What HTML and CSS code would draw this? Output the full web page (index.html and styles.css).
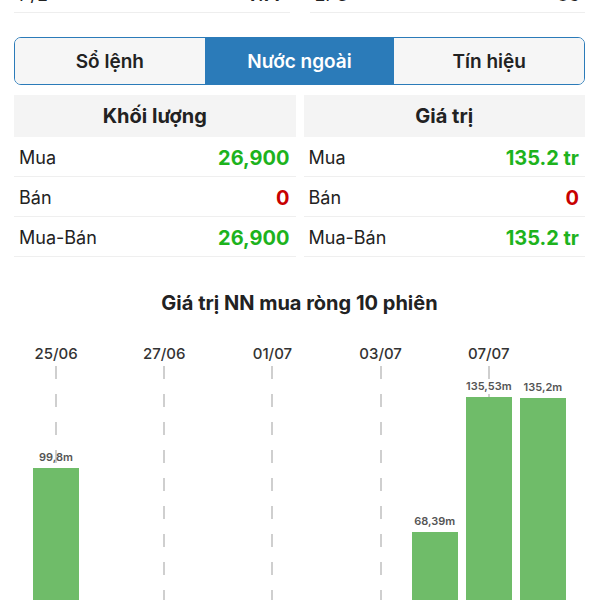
FILE: index.html
```html
<!DOCTYPE html>
<html lang="vi">
<head>
    <meta charset="UTF-8">
    <meta name="viewport" content="width=device-width, initial-scale=1.0">
    <title>Nước ngoài</title>
    <link rel="stylesheet" href="styles.css">
</head>
<body>
    <div class="page">
        <!-- row cut off by the top of the screen -->
        <div class="stats">
            <div class="stat-cell"><span>P/E</span><span class="stat-val">7.77</span></div>
            <div class="stat-cell"><span>EPS</span><span class="stat-val">35</span></div>
        </div>

        <div class="tabs">
            <div class="tab">Sổ lệnh</div>
            <div class="tab active">Nước ngoài</div>
            <div class="tab">Tín hiệu</div>
        </div>

        <div class="tables">
            <div class="table">
                <div class="table-head">Khối lượng</div>
                <div class="table-row"><span>Mua</span><span class="num up">26,900</span></div>
                <div class="table-row"><span>Bán</span><span class="num down">0</span></div>
                <div class="table-row"><span>Mua-Bán</span><span class="num up">26,900</span></div>
            </div>
            <div class="table">
                <div class="table-head">Giá trị</div>
                <div class="table-row"><span>Mua</span><span class="num up">135.2 tr</span></div>
                <div class="table-row"><span>Bán</span><span class="num down">0</span></div>
                <div class="table-row"><span>Mua-Bán</span><span class="num up">135.2 tr</span></div>
            </div>
        </div>

        <h2 class="chart-title">Giá trị NN mua ròng 10 phiên</h2>

        <div class="chart">
            <div class="col grid">
                <div class="date">25/06</div>
                <div class="plot">
                    <div class="bar-label">99,8m</div>
                    <div class="bar" style="height: 198px"></div>
                </div>
            </div>
            <div class="col"><div class="date"></div><div class="plot"></div></div>
            <div class="col grid"><div class="date">27/06</div><div class="plot"></div></div>
            <div class="col"><div class="date"></div><div class="plot"></div></div>
            <div class="col grid"><div class="date">01/07</div><div class="plot"></div></div>
            <div class="col"><div class="date"></div><div class="plot"></div></div>
            <div class="col grid"><div class="date">03/07</div><div class="plot"></div></div>
            <div class="col">
                <div class="date"></div>
                <div class="plot">
                    <div class="bar-label">68,39m</div>
                    <div class="bar" style="height: 134px"></div>
                </div>
            </div>
            <div class="col grid">
                <div class="date">07/07</div>
                <div class="plot">
                    <div class="bar-label">135,53m</div>
                    <div class="bar" style="height: 269px"></div>
                </div>
            </div>
            <div class="col">
                <div class="date"></div>
                <div class="plot">
                    <div class="bar-label">135,2m</div>
                    <div class="bar" style="height: 268px"></div>
                </div>
            </div>
        </div>
    </div>
</body>
</html>
```

FILE: styles.css
```css
/* Base */
* {
    margin: 0;
    padding: 0;
    box-sizing: border-box;
}

body {
    font-family: Inter, Roboto, 'Noto Sans', sans-serif;
    color: #222;
    background-color: #fff;
    overflow: hidden;
}

.page {
    padding: 0 15px 0 14px;
}

/* Stats row (mostly scrolled away) */
.stats {
    display: grid;
    grid-template-columns: 1fr 1fr;
    gap: 20px;
    margin-top: -30px;
}

.stat-cell {
    display: flex;
    justify-content: space-between;
    align-items: flex-end;
    height: 43px;
    padding: 0 5px 6px;
    font-size: 18px;
    line-height: 22px;
    border-bottom: 1px solid #eeeeee;
}

.stat-val {
    font-weight: 700;
}

/* Tabs */
.tabs {
    display: flex;
    margin-top: 24px;
    height: 48px;
    border: 1.5px solid #2b7bb9;
    border-radius: 7px;
    overflow: hidden;
}

.tab {
    flex: 1;
    display: flex;
    align-items: center;
    justify-content: center;
    background-color: #f6f6f6;
    font-size: 19px;
    font-weight: 600;
    color: #222;
}

.tab.active {
    background-color: #2b7bb9;
    color: #fff;
}

/* Tables */
.tables {
    display: grid;
    grid-template-columns: 1fr 1fr;
    gap: 8px;
    margin-top: 10px;
}

.table-head {
    height: 42px;
    display: flex;
    align-items: center;
    justify-content: center;
    background-color: #f4f4f4;
    font-size: 20px;
    font-weight: 700;
}

.table-row {
    height: 40px;
    display: flex;
    align-items: center;
    justify-content: space-between;
    padding: 2px 6px 0 5px;
    font-size: 18px;
    border-bottom: 1px solid #efefef;
}

.num {
    font-size: 20px;
    font-weight: 700;
}

.num.up {
    color: #1db31d;
}

.num.down {
    color: #c80000;
}

/* Chart */
.chart-title {
    margin-top: 33px;
    text-align: center;
    font-size: 20px;
    line-height: 26px;
    font-weight: 700;
}

.chart {
    display: flex;
    margin: 28px 15px 0;
}

.col {
    flex: 1;
    display: flex;
    flex-direction: column;
    align-items: center;
}

.date {
    height: 22px;
    font-size: 15px;
    line-height: 20px;
    font-weight: 500;
    color: #333;
}

.plot {
    position: relative;
    width: 100%;
    height: 300px;
    display: flex;
    flex-direction: column;
    justify-content: flex-end;
    align-items: center;
}

.col.grid .plot::before {
    content: "";
    position: absolute;
    top: 0;
    bottom: 0;
    left: calc(50% - 1px);
    width: 2px;
    background: repeating-linear-gradient(to bottom, #cfcfcf 0 13px, transparent 13px 28px);
}

.bar-label {
    position: relative;
    font-size: 11px;
    font-weight: 600;
    color: #555;
    margin-bottom: 4px;
}

.bar {
    position: relative;
    width: 46px;
    background-color: #6fbc69;
}
```
